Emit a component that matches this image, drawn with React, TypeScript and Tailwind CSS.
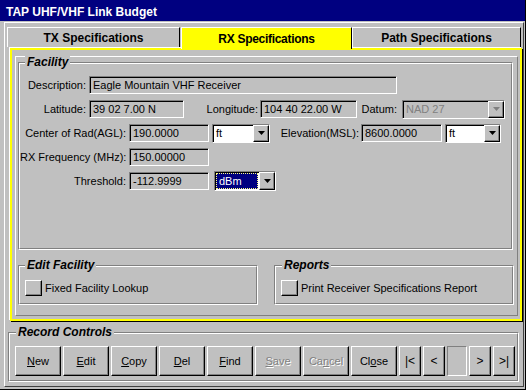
import type { ReactNode } from "react";

const raised =
  "border border-t-white border-l-white border-r-black border-b-black shadow-[inset_-1px_-1px_0_#808080]";
const sunken =
  "border border-t-[#808080] border-l-[#808080] border-r-white border-b-white shadow-[inset_1px_1px_0_#000]";

const tabs = [
  { label: "TX Specifications", width: "w-[173px]", active: false },
  { label: "RX Specifications", width: "w-[171px]", active: true },
  { label: "Path Specifications", width: "w-[169px]", active: false },
];

function App() {
  return (
    <main className="flex h-[390px] w-[526px] flex-col overflow-hidden border-r border-b border-black bg-[#c0c0c0] font-['Liberation_Sans',Arial,sans-serif] text-black">
      <header className="flex h-[21px] shrink-0 items-center bg-[#000080] pl-[6px] pt-[2px] text-[12px] font-bold text-white">
        TAP UHF/VHF Link Budget
      </header>

      <div className="mt-[1px] mr-[1px] mb-[2px] ml-[4px] flex flex-1 flex-col border border-t-white border-l-white border-r-[#404040] border-b-[#404040] pt-[4px]">
        <nav className="ml-[2px] flex h-[20px]">
          {tabs.map((tab) => (
            <div
              key={tab.label}
              className={`relative flex items-center justify-center border-t border-l border-r border-t-white border-l-white border-r-black text-[12px] font-bold ${tab.width} ${
                tab.active ? "z-10 -mb-[2px] bg-[#ffff00] tracking-[-0.3px]" : "mr-[1px]"
              }`}
            >
              {tab.label}
            </div>
          ))}
        </nav>

        <section className="mt-[1px] ml-[5px] flex h-[273px] w-[512px] flex-col border-2 border-[#ffff00] bg-[#c0c0c0] shadow-[-1px_-1px_0_#fff,1px_1px_0_#000]">
          <div className="mt-[6px] mr-[2px] mb-[3px] ml-[3px] flex flex-1 flex-col border border-t-white border-l-white border-r-[#808080] border-b-[#808080] pt-[5px] pl-[2px]">
            <GroupBox title="Facility" className="h-[188px] w-[495px]">
              <div className="flex flex-col gap-[6px] pt-[12px] text-[11px]">
                <div className="flex h-[18px] items-center">
                  <Label className="w-[66px]">Description:</Label>
                  <Field className="ml-[3px] w-[308px]">Eagle Mountain VHF Receiver</Field>
                </div>
                <div className="flex h-[18px] items-center">
                  <Label className="w-[66px]">Latitude:</Label>
                  <Field className="ml-[3px] w-[95px]">39 02 7.00 N</Field>
                  <Label className="w-[74px]">Longitude:</Label>
                  <Field className="ml-[2px] w-[97px]">104 40 22.00 W</Field>
                  <Label className="w-[40px]">Datum:</Label>
                  <Dropdown className="ml-[5px] w-[103px]" value="NAD 27" variant="disabled" />
                </div>
                <div className="flex h-[18px] items-center">
                  <Label className="w-[106px]">Center of Rad(AGL):</Label>
                  <Field className="ml-[3px] w-[80px]">190.0000</Field>
                  <Dropdown className="ml-[3px] w-[58px]" value="ft" />
                  <Label className="w-[89px]">Elevation(MSL):</Label>
                  <Field className="ml-[2px] w-[81px]">8600.0000</Field>
                  <Dropdown className="ml-[3px] w-[56px]" value="ft" />
                </div>
                <div className="flex h-[18px] items-center">
                  <Label className="w-[106px]">RX Frequency (MHz):</Label>
                  <Field className="ml-[3px] w-[80px]">150.00000</Field>
                </div>
                <div className="flex h-[18px] items-center">
                  <Label className="w-[106px]">Threshold:</Label>
                  <Field className="ml-[3px] w-[80px]">-112.9999</Field>
                  <Dropdown className="ml-[5px] h-[20px] w-[62px]" value="dBm" variant="focused" />
                </div>
              </div>
            </GroupBox>

            <div className="mt-[15px] flex gap-[16px]">
              <GroupBox title="Edit Facility" className="h-[40px] w-[240px]">
                <CheckRow label="Fixed Facility Lookup" />
              </GroupBox>
              <GroupBox title="Reports" className="h-[40px] w-[240px]" titleClass="left-[7px]">
                <CheckRow label="Print Receiver Specifications Report" />
              </GroupBox>
            </div>
          </div>
        </section>

        <GroupBox
          title="Record Controls"
          className="mt-[11px] ml-[3px] h-[50px] w-[511px]"
          titleClass="left-[7px]"
        >
          <div className="flex gap-[2px] pt-[12px] pl-[5px] text-[11px]">
            <Button>
              <u>N</u>ew
            </Button>
            <Button>
              <u>E</u>dit
            </Button>
            <Button>
              <u>C</u>opy
            </Button>
            <Button>
              <u>D</u>el
            </Button>
            <Button>
              <u>F</u>ind
            </Button>
            <Button disabled>
              <u>S</u>ave
            </Button>
            <Button disabled>
              Ca<u>n</u>cel
            </Button>
            <Button>
              Cl<u>o</u>se
            </Button>
            <Button className="w-[22px] text-[12px]">|&lt;</Button>
            <Button className="w-[22px] text-[12px]">&lt;</Button>
            <div className="h-[30px] w-[20px] border border-t-[#808080] border-l-[#808080] border-r-white border-b-white" />
            <Button className="w-[22px] text-[12px]">&gt;</Button>
            <Button className="w-[22px] text-[12px]">&gt;|</Button>
          </div>
        </GroupBox>
      </div>
    </main>
  );
}

// etched frame: grey line with a white line one pixel down and right
function GroupBox({
  title,
  className = "",
  titleClass = "left-[6px]",
  children,
}: {
  title: string;
  className?: string;
  titleClass?: string;
  children: ReactNode;
}) {
  return (
    <div
      className={`relative flex shrink-0 border border-t-[#808080] border-l-[#808080] border-r-white border-b-white ${className}`}
    >
      <div className="flex-1 border border-t-white border-l-white border-r-[#808080] border-b-[#808080]">
        {children}
      </div>
      <span
        className={`absolute -top-[8px] bg-[#c0c0c0] px-[2px] text-[12px] leading-[14px] font-bold italic ${titleClass}`}
      >
        {title}
      </span>
    </div>
  );
}

function Label({ className = "", children }: { className?: string; children: ReactNode }) {
  return <span className={`shrink-0 text-right whitespace-nowrap ${className}`}>{children}</span>;
}

function Field({ className = "", children }: { className?: string; children: ReactNode }) {
  return (
    <div className={`flex h-[18px] shrink-0 items-center pl-[3px] whitespace-nowrap ${sunken} ${className}`}>
      {children}
    </div>
  );
}

function Dropdown({
  value,
  className = "",
  variant = "normal",
}: {
  value: string;
  className?: string;
  variant?: "normal" | "disabled" | "focused";
}) {
  const box =
    variant === "disabled" ? "bg-[#c0c0c0] text-[#808080]" : "bg-white text-black";
  return (
    <div className={`flex h-[19px] shrink-0 items-stretch ${sunken} ${box} ${className}`}>
      <div className="flex min-w-0 flex-1 items-stretch p-[1px]">
        <span
          className={`flex flex-1 items-center pl-[2px] ${
            variant === "focused"
              ? "border border-dotted border-[#ffff80] bg-[#000080] text-white"
              : ""
          }`}
        >
          {value}
        </span>
      </div>
      <div className={`flex w-[16px] shrink-0 items-center justify-center bg-[#c0c0c0] ${raised}`}>
        <svg width="7" height="4" viewBox="0 0 7 4">
          <path d="M0 0h7L3.5 4z" fill={variant === "disabled" ? "#808080" : "#000"} />
        </svg>
      </div>
    </div>
  );
}

function CheckRow({ label }: { label: string }) {
  return (
    <div className="flex items-center gap-[3px] pt-[13px] pl-[5px] text-[11px]">
      <span className={`h-[16px] w-[17px] ${raised}`} />
      <span className="whitespace-nowrap">{label}</span>
    </div>
  );
}

function Button({
  children,
  className = "w-[46px]",
  disabled = false,
}: {
  children: ReactNode;
  className?: string;
  disabled?: boolean;
}) {
  return (
    <div
      className={`flex h-[30px] shrink-0 items-center justify-center underline-offset-[1px] ${raised} ${
        disabled ? "text-[#808080] [text-shadow:1px_1px_0_#fff]" : ""
      } ${className}`}
    >
      <span>{children}</span>
    </div>
  );
}

export default App;
